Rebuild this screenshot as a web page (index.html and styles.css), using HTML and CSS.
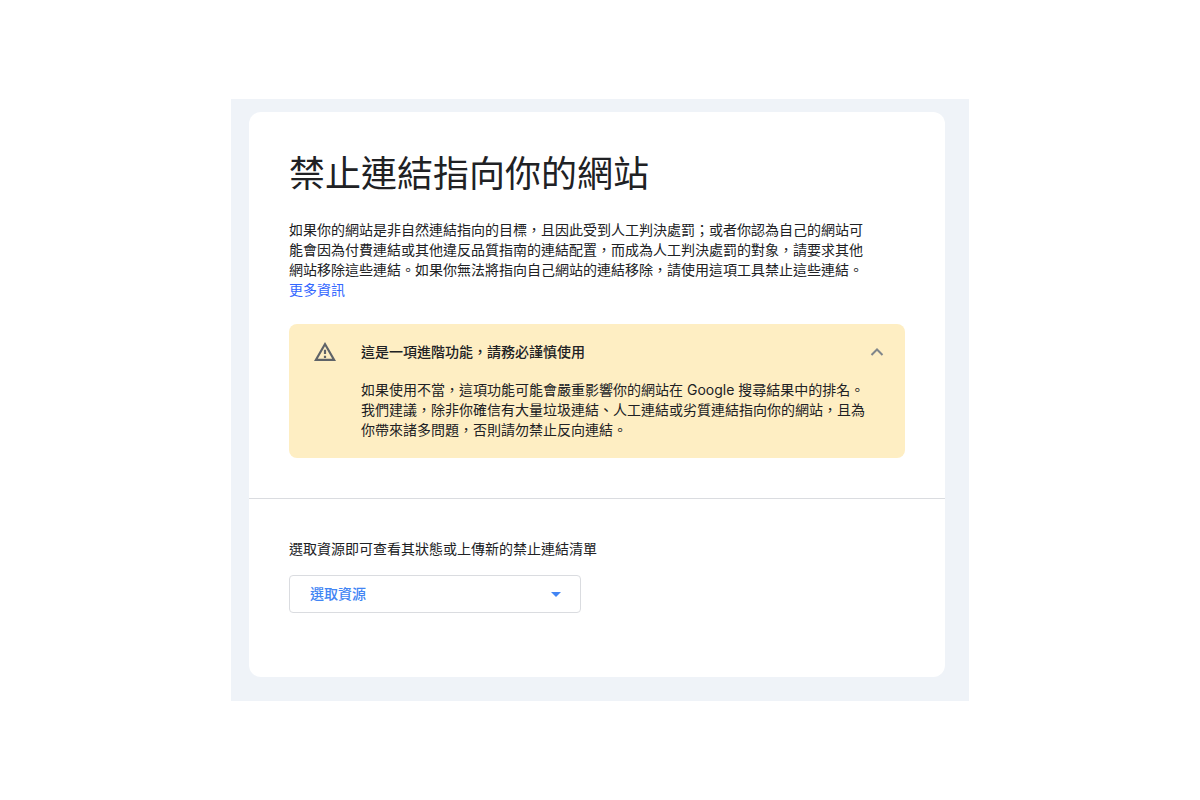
FILE: index.html
```html
<!DOCTYPE html>
<html lang="zh-Hant">
<head>
    <meta charset="UTF-8">
    <meta name="viewport" content="width=device-width, initial-scale=1.0">
    <title>禁止連結指向你的網站</title>
    <link rel="stylesheet" href="styles.css">
</head>
<body>
<main class="page">
    <div class="card">
        <section class="intro">
            <h1>禁止連結指向你的網站</h1>
            <p class="description">如果你的網站是非自然連結指向的目標，且因此受到人工判決處罰；或者你認為自己的網站可能會因為付費連結或其他違反品質指南的連結配置，而成為人工判決處罰的對象，請要求其他網站移除這些連結。如果你無法將指向自己網站的連結移除，請使用這項工具禁止這些連結。<a href="#">更多資訊</a></p>

            <div class="warning">
                <svg class="warning-icon" viewBox="0 0 24 24" width="24" height="24" aria-hidden="true">
                    <path d="M12 6.2L19.2 18.8H4.8L12 6.2M12 2L1 21h22L12 2zm1.1 13.8h-2.2V18h2.2zm0-6h-2.2V14h2.2z"/>
                </svg>
                <div class="warning-content">
                    <h2>這是一項進階功能，請務必謹慎使用</h2>
                    <p id="warningText">如果使用不當，這項功能可能會嚴重影響你的網站在 Google 搜尋結果中的排名。我們建議，除非你確信有大量垃圾連結、人工連結或劣質連結指向你的網站，且為你帶來諸多問題，否則請勿禁止反向連結。</p>
                </div>
                <button class="collapse" type="button" aria-label="收合" aria-expanded="true" aria-controls="warningText">
                    <svg viewBox="0 0 20 20" width="20" height="20" aria-hidden="true">
                        <path d="M4.5 13L10 7.5l5.5 5.5"/>
                    </svg>
                </button>
            </div>
        </section>

        <section class="property">
            <label for="property">選取資源即可查看其狀態或上傳新的禁止連結清單</label>
            <div class="select-box">
                <select id="property">
                    <option>選取資源</option>
                </select>
                <svg viewBox="0 0 10 5" width="10" height="5" aria-hidden="true">
                    <path d="M0 0h10L5 5z"/>
                </svg>
            </div>
        </section>
    </div>
</main>
</body>
</html>
```
FILE: styles.css
```css
* {
    box-sizing: border-box;
}
body {
    margin: 0;
    padding: 99px 20px;
    background: #fff;
    color: #202124;
    font-family: Inter, "Noto Sans CJK TC", sans-serif;
    font-size: 14px;
    line-height: 20px;
}
h1, h2, p {
    margin: 0;
}
.page {
    max-width: 738px;
    margin: 0 auto;
    padding: 13px 24px 24px 18px;
    background: #eff3f8;
}
.card {
    background: #fff;
    border-radius: 12px;
}
.intro {
    padding: 40px;
    border-bottom: 1px solid #dadce0;
}
h1 {
    margin-bottom: 24px;
    font-size: 36px;
    font-weight: 400;
    line-height: 44px;
}
.description {
    max-width: 584px;
    margin-bottom: 24px;
}
a {
    color: #3367ff;
    text-decoration: none;
}
.warning {
    display: flex;
    align-items: flex-start;
    padding: 18px 18px 18px 24px;
    background: #feeec3;
    border-radius: 8px;
}
.warning-icon {
    flex: none;
    margin-right: 24px;
    margin-top: -2px;
    fill: #5f6368;
}
.warning-content {
    flex: 1;
}
.warning-content h2 {
    margin-bottom: 18px;
    font-size: 14px;
    font-weight: 500;
    line-height: 20px;
}
.warning-content p {
    max-width: 512px;
}
.collapse {
    display: flex;
    flex: none;
    margin-left: -14px;
    padding: 0;
    border: none;
    background: none;
    cursor: pointer;
}
.collapse svg {
    fill: none;
    stroke: #80868b;
    stroke-width: 2;
}
.property {
    padding: 40px 40px 64px;
}
.property label {
    display: block;
    margin-bottom: 16px;
}
.select-box {
    display: grid;
    align-items: center;
    max-width: 292px;
}
.select-box select,
.select-box svg {
    grid-area: 1 / 1;
}
.select-box select {
    width: 100%;
    height: 38px;
    padding: 0 40px 0 20px;
    appearance: none;
    border: 1px solid #dadce0;
    border-radius: 4px;
    background: #fff;
    color: #4285f4;
    font: inherit;
    font-weight: 500;
    cursor: pointer;
}
.select-box svg {
    justify-self: end;
    margin-right: 20px;
    fill: #4285f4;
    pointer-events: none;
}
```
